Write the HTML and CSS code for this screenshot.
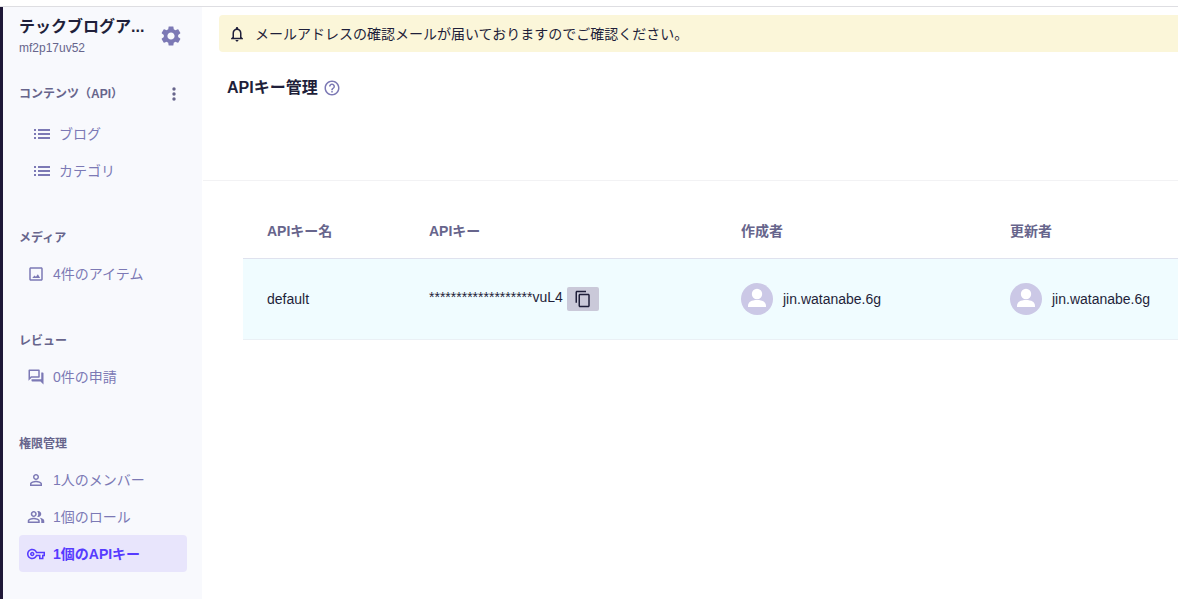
FILE: index.html
```html
<!DOCTYPE html>
<html lang="ja">
    <head>
        <meta charset="utf-8">
        <title>APIキー管理</title>
        <link rel="stylesheet" href="styles.css">
    </head>
    <body>
        <div class="topline"></div>
        <div class="layout">
            <nav class="sidebar">
                <div class="service">
                    <div class="service-text">
                        <div class="service-name">テックブログア...</div>
                        <div class="service-id">mf2p17uv52</div>
                    </div>
                    <svg class="gear" viewBox="0 0 24 24"><path d="M19.14 12.94c.04-.3.06-.61.06-.94 0-.32-.02-.64-.07-.94l2.03-1.58c.18-.14.23-.41.12-.61l-1.92-3.32c-.12-.22-.37-.29-.59-.22l-2.39.96c-.5-.38-1.03-.7-1.62-.94L14.4 2.81c-.04-.24-.24-.41-.48-.41h-3.84c-.24 0-.43.17-.47.41l-.36 2.54c-.59.24-1.13.57-1.62.94l-2.39-.96c-.22-.08-.47 0-.59.22L2.74 8.87c-.12.21-.08.47.12.61l2.03 1.58c-.05.3-.09.63-.09.94s.02.64.07.94l-2.03 1.58c-.18.14-.23.41-.12.61l1.92 3.32c.12.22.37.29.59.22l2.39-.96c.5.38 1.03.7 1.62.94l.36 2.54c.05.24.24.41.48.41h3.84c.24 0 .44-.17.47-.41l.36-2.54c.59-.24 1.13-.56 1.62-.94l2.39.96c.22.08.47 0 .59-.22l1.92-3.32c.12-.22.07-.47-.12-.61l-2.01-1.58zM12 15.6c-1.98 0-3.6-1.62-3.6-3.6s1.62-3.6 3.6-3.6 3.6 1.62 3.6 3.6-1.62 3.6-3.6 3.6z"/></svg>
                </div>

                <div class="group contents">
                    <h2>コンテンツ（API）
                        <svg class="more" viewBox="0 0 4 14"><circle cx="2" cy="2" r="1.7"/><circle cx="2" cy="7" r="1.7"/><circle cx="2" cy="12" r="1.7"/></svg>
                    </h2>
                    <a class="item">
                        <svg class="icon" viewBox="0 0 18 18"><path d="M1 4h2v2H1zM1 8h2v2H1zM1 12h2v2H1zM5 4h12v2H5zM5 8h12v2H5zM5 12h12v2H5z"/></svg>
                        ブログ
                    </a>
                    <a class="item">
                        <svg class="icon" viewBox="0 0 18 18"><path d="M1 4h2v2H1zM1 8h2v2H1zM1 12h2v2H1zM5 4h12v2H5zM5 8h12v2H5zM5 12h12v2H5z"/></svg>
                        カテゴリ
                    </a>
                </div>

                <div class="group">
                    <h2>メディア</h2>
                    <a class="item">
                        <svg class="icon" viewBox="0 0 24 24"><path d="M19 5v14H5V5h14m0-2H5c-1.100 0-2 .9-2 2v14c0 1.100.9 2 2 2h14c1.100 0 2-.9 2-2V5c0-1.100-.9-2-2-2zM14.500 12.300l-2.600 3.400-1.900-1.700L7 17.300h10.500z"/></svg>
                        4件のアイテム
                    </a>
                </div>

                <div class="group">
                    <h2>レビュー</h2>
                    <a class="item">
                        <svg class="icon" viewBox="0 0 24 24"><path d="M15 4v7H5.170L4 12.170V4h11m1-2H3c-.55 0-1 .45-1 1v14l4-4h10c.55 0 1-.45 1-1V3c0-.55-.45-1-1-1zm5 4h-2v9H6v2c0 .55.45 1 1 1h11l4 4V7c0-.55-.45-1-1-1z"/></svg>
                        0件の申請
                    </a>
                </div>

                <div class="group">
                    <h2>権限管理</h2>
                    <a class="item">
                        <svg class="icon" viewBox="0 0 24 24"><path d="M12 5.900c1.160 0 2.100.94 2.100 2.100s-.94 2.100-2.100 2.100S9.900 9.160 9.900 8s.94-2.100 2.100-2.100m0 9c2.970 0 6.100 1.460 6.100 2.100v1.100H5.900V17c0-.64 3.130-2.100 6.100-2.100M12 4C9.790 4 8 5.790 8 8s1.790 4 4 4 4-1.790 4-4-1.790-4-4-4zm0 9c-2.670 0-8 1.340-8 4v3h16v-3c0-2.660-5.330-4-8-4z"/></svg>
                        1人のメンバー
                    </a>
                    <a class="item">
                        <svg class="icon" viewBox="0 0 24 24"><path d="M16.670 13.130C18.040 14.060 19 15.320 19 17v3h4v-3c0-2.180-3.570-3.470-6.330-3.870zM15 12c2.210 0 4-1.790 4-4s-1.790-4-4-4c-.47 0-.91.1-1.330.24C14.500 5.270 15 6.580 15 8s-.5 2.730-1.330 3.760c.42.14.86.24 1.330.24zM9 12c2.210 0 4-1.790 4-4s-1.790-4-4-4-4 1.790-4 4 1.790 4 4 4zm0-6c1.100 0 2 .9 2 2s-.9 2-2 2-2-.9-2-2 .9-2 2-2zM9 13c-2.670 0-8 1.340-8 4v3h16v-3c0-2.660-5.330-4-8-4zm6 5H3v-.99C3.200 16.290 6.300 15 9 15s5.800 1.290 6 2v1z"/></svg>
                        1個のロール
                    </a>
                    <a class="item active">
                        <svg class="icon" viewBox="0 0 24 24"><path d="M22 19h-6v-4h-2.680c-1.140 2.420-3.600 4-6.320 4-3.860 0-7-3.140-7-7s3.140-7 7-7c2.720 0 5.170 1.580 6.320 4H24v6h-2v4zm-4-2h2v-4h2v-2H11.940l-.23-.67C11.010 8.340 9.110 7 7 7c-2.760 0-5 2.240-5 5s2.240 5 5 5c2.110 0 4.010-1.340 4.710-3.330l.23-.67H18v4zM7 15c-1.650 0-3-1.350-3-3s1.350-3 3-3 3 1.350 3 3-1.350 3-3 3zm0-4c-.55 0-1 .45-1 1s.45 1 1 1 1-.45 1-1-.45-1-1-1z"/></svg>
                        1個のAPIキー
                    </a>
                </div>
            </nav>

            <main>
                <div class="notice">
                    <svg class="bell" viewBox="0 0 24 24"><path d="M12 22c1.100 0 2-.9 2-2h-4c0 1.100.9 2 2 2zm6-6v-5c0-3.070-1.630-5.640-4.500-6.320V4c0-.83-.67-1.500-1.500-1.500s-1.500.67-1.500 1.500v.68C7.640 5.360 6 7.920 6 11v5l-2 2v1h16v-1l-2-2zm-2 1H8v-6c0-2.480 1.510-4.500 4-4.500s4 2.020 4 4.500v6z"/></svg>
                    <span>メールアドレスの確認メールが届いておりますのでご確認ください。</span>
                </div>
                <header>
                    <h1>APIキー管理</h1>
                    <svg class="help" viewBox="0 0 24 24"><path d="M11 18h2v-2h-2v2zm1-16C6.480 2 2 6.480 2 12s4.480 10 10 10 10-4.480 10-10S17.520 2 12 2zm0 18c-4.410 0-8-3.590-8-8s3.590-8 8-8 8 3.590 8 8-3.590 8-8 8zm0-14c-2.210 0-4 1.790-4 4h2c0-1.100.9-2 2-2s2 .9 2 2c0 2-3 1.750-3 5h2c0-2.250 3-2.500 3-5 0-2.210-1.790-4-4-4z"/></svg>
                </header>
                <table>
                    <tr>
                        <th class="col-name">APIキー名</th>
                        <th class="col-key">APIキー</th>
                        <th class="col-creator">作成者</th>
                        <th class="col-updater">更新者</th>
                    </tr>
                    <tr class="key-row">
                        <td>default</td>
                        <td>
                            <div class="key">
                                <span>*******************vuL4</span>
                                <button class="copy">
                                    <svg viewBox="0 0 24 24"><path d="M16 1H4c-1.100 0-2 .9-2 2v14h2V3h12V1zm3 4H8c-1.100 0-2 .9-2 2v14c0 1.100.9 2 2 2h11c1.100 0 2-.9 2-2V7c0-1.100-.9-2-2-2zm0 16H8V7h11v14z"/></svg>
                                </button>
                            </div>
                        </td>
                        <td>
                            <div class="user">
                                <svg class="avatar" viewBox="0 0 32 32"><circle class="avatar-bg" cx="16" cy="16" r="16"/><circle cx="16" cy="11" r="5.200"/><path d="M7 24v-1c0-4 3.500-6 9-6s9 2 9 6v1z"/></svg>
                                jin.watanabe.6g
                            </div>
                        </td>
                        <td>
                            <div class="user">
                                <svg class="avatar" viewBox="0 0 32 32"><circle class="avatar-bg" cx="16" cy="16" r="16"/><circle cx="16" cy="11" r="5.200"/><path d="M7 24v-1c0-4 3.500-6 9-6s9 2 9 6v1z"/></svg>
                                jin.watanabe.6g
                            </div>
                        </td>
                    </tr>
                </table>
            </main>
        </div>
    </body>
</html>
```

FILE: styles.css
```css
*
{
    box-sizing: border-box;
}
body
{
    margin: 0;
    height: 599px;
    overflow: hidden;
    background-color: #fff;
    color: #1f1f3a;
    font-family: "Liberation Sans", "Noto Sans CJK JP", sans-serif;
    font-size: 14px;
    line-height: 20px;
}
svg
{
    display: block;
    flex: none;
    fill: currentColor;
}
.topline
{
    height: 7px;
    border-bottom: 1px solid #dedee2;
}
.layout
{
    display: flex;
    height: 592px;
}

/* sidebar */
.sidebar
{
    flex: none;
    width: 202px;
    padding: 8px 15px 0 16px;
    border-left: 3px solid #1f1838;
    background-color: #f8f9fd;
    color: #7c79b5;
}
.service
{
    display: flex;
    justify-content: space-between;
    height: 71px;
}
.service-text
{
    white-space: nowrap;
}
.service-name
{
    height: 24px;
    color: #1f1f3a;
    font-size: 16px;
    font-weight: bold;
    line-height: 24px;
}
.service-id
{
    color: #67658c;
    font-size: 12px;
    line-height: 18px;
}
.gear
{
    width: 24px;
    height: 24px;
    margin: 9px 4px 0 0;
}
.group
{
    margin-bottom: 41px;
}
.group h2
{
    display: flex;
    align-items: center;
    justify-content: space-between;
    height: 16px;
    margin: 0 0 9px;
    color: #67658c;
    font-size: 12px;
    line-height: 16px;
}
.group.contents h2
{
    margin-bottom: 13px;
}
.more
{
    width: 4px;
    height: 14px;
    margin-right: 11px;
}
.item
{
    display: flex;
    align-items: center;
    gap: 8px;
    height: 37px;
    padding-left: 8px;
    border-radius: 4px;
    white-space: nowrap;
}
.contents .item
{
    padding-left: 14px;
}
.icon
{
    width: 18px;
    height: 18px;
}
.item.active
{
    background-color: #e8e5fc;
    color: #563bff;
    font-weight: bold;
}

/* main area */
main
{
    flex: 1;
    min-width: 0;
    padding-top: 8px;
}
.notice
{
    display: flex;
    align-items: center;
    gap: 9px;
    height: 37px;
    margin-left: 17px;
    padding-left: 9px;
    border-radius: 4px 0 0 4px;
    background-color: #fbf6d9;
}
.bell
{
    width: 18px;
    height: 18px;
}
header
{
    display: flex;
    gap: 5px;
    height: 129px;
    margin-left: 1px;
    padding: 24px 0 0 24px;
    border-bottom: 1px solid #f2f2f4;
}
h1
{
    margin: 0;
    font-size: 16px;
    line-height: 24px;
}
.help
{
    width: 18px;
    height: 18px;
    margin-top: 3px;
    color: #7c79b5;
}
table
{
    width: 1004px;
    margin: 22px 0 0 41px;
    table-layout: fixed;
    border-spacing: 0;
}
th
{
    height: 56px;
    padding: 0 24px;
    border-bottom: 1px solid #dfe2ee;
    color: #67658c;
    text-align: left;
}
td
{
    height: 81px;
    padding: 0 24px;
    border-bottom: 1px solid #eaf0f5;
}
.key-row
{
    background-color: #f0fcff;
}
.col-name
{
    width: 162px;
}
.col-key
{
    width: 312px;
}
.col-creator
{
    width: 269px;
}
.key
{
    display: flex;
    gap: 4px;
    line-height: 20px;
}
.copy
{
    display: flex;
    align-items: center;
    justify-content: center;
    width: 32px;
    height: 24px;
    padding: 0;
    border: 0;
    border-radius: 2px;
    background-color: #cac9d9;
    color: #1f1f3a;
}
.copy svg
{
    width: 18px;
    height: 18px;
}
.user
{
    display: flex;
    align-items: center;
    gap: 10px;
}
.avatar
{
    width: 32px;
    height: 32px;
    fill: #fff;
}
.avatar-bg
{
    fill: #cbc8e6;
}
```
